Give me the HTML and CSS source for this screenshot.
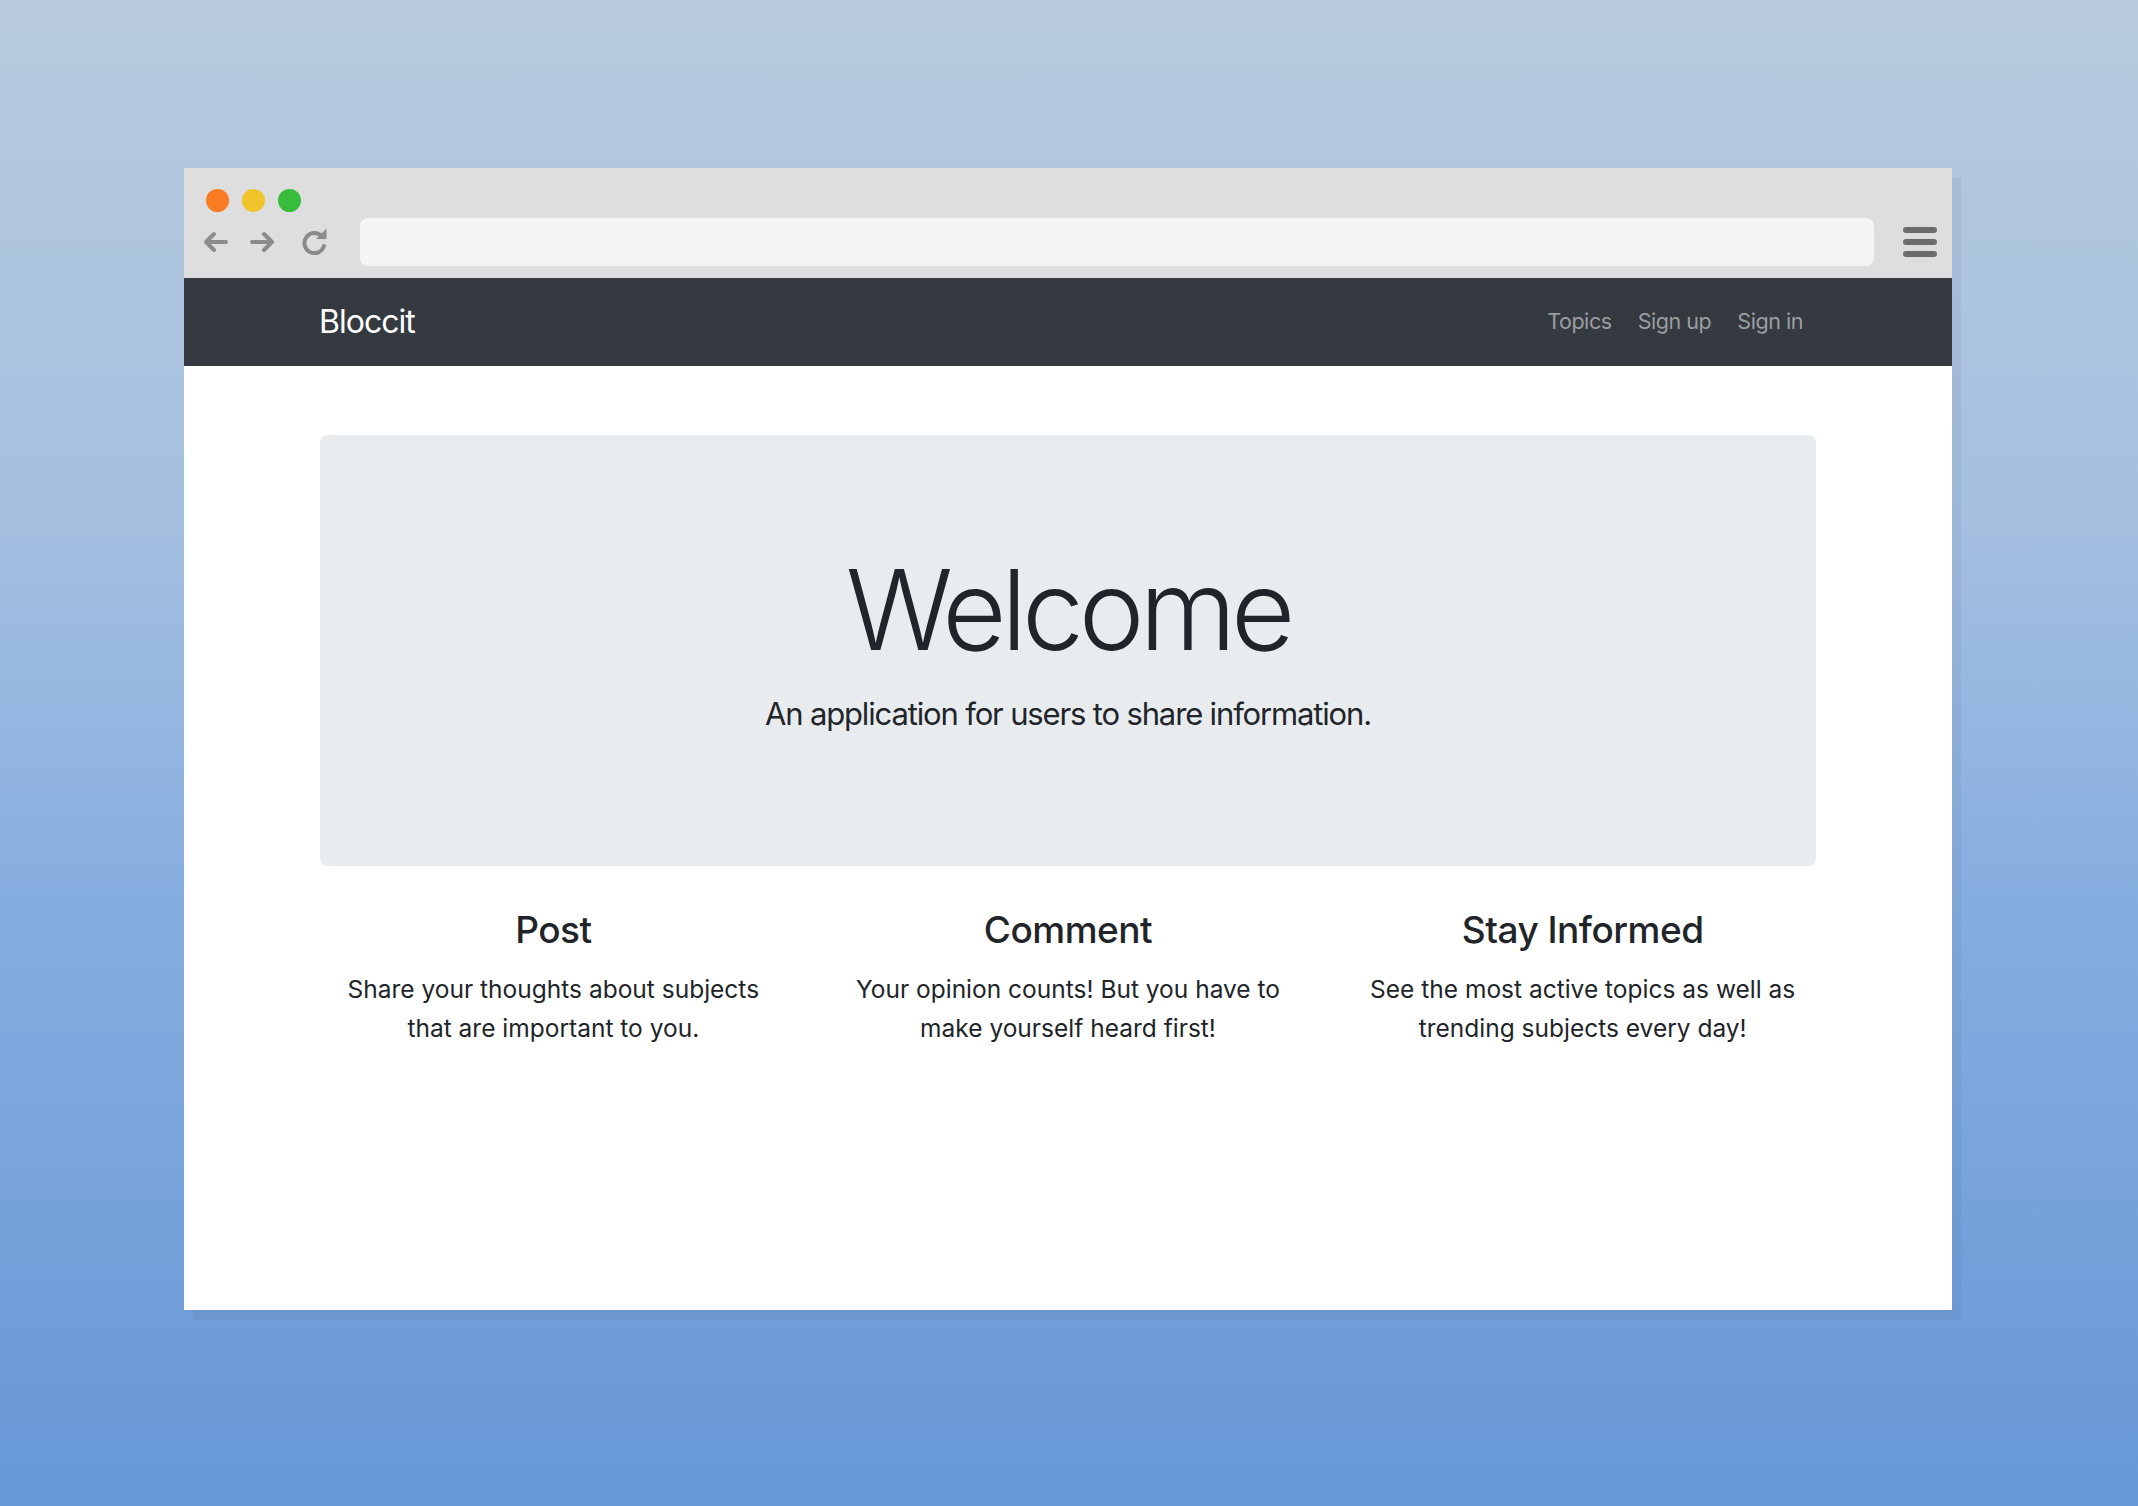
FILE: index.html
```html
<!DOCTYPE html>
<html lang="en">
<head>
<meta charset="utf-8">
<title>Bloccit</title>
<link rel="stylesheet" href="styles.css">
</head>
<body>
<div class="stage">
  <div class="window">
    <div class="chrome">
      <div class="lights">
        <span class="light red"></span>
        <span class="light yellow"></span>
        <span class="light green"></span>
      </div>
      <div class="toolbar">
        <div class="navbtns">
          <svg class="ico back" width="25" height="22" viewBox="0 0 25 22"><path d="M23 11H3M11 3L3 11L11 19" fill="none" stroke="#8b8b8b" stroke-width="4" stroke-linecap="round" stroke-linejoin="round"/></svg>
          <svg class="ico fwd" width="25" height="22" viewBox="0 0 25 22"><path d="M2 11H22M14 3L22 11L14 19" fill="none" stroke="#8b8b8b" stroke-width="4" stroke-linecap="round" stroke-linejoin="round"/></svg>
          <svg class="ico reload" width="27" height="28" viewBox="0 0 27 28"><path d="M21 8.5A10 10 0 1 0 23 18" fill="none" stroke="#8b8b8b" stroke-width="4" stroke-linecap="round"/><polygon points="15,11 25.5,11 25.5,0.5" fill="#8b8b8b"/></svg>
        </div>
        <div class="address"></div>
        <svg class="menu" width="34" height="31" viewBox="0 0 34 31"><rect x="0" y="0" width="34" height="6" rx="3" fill="#6b6b6b"/><rect x="0" y="12" width="34" height="6" rx="3" fill="#6b6b6b"/><rect x="0" y="24" width="34" height="6" rx="3" fill="#6b6b6b"/></svg>
      </div>
    </div>
    <nav class="navbar">
      <div class="container nav-inner">
        <a class="brand">Bloccit</a>
        <ul class="links">
          <li><a>Topics</a></li>
          <li><a>Sign up</a></li>
          <li><a>Sign in</a></li>
        </ul>
      </div>
    </nav>
    <main class="container">
      <section class="jumbotron">
        <h1 class="display">Welcome</h1>
        <p class="lead">An application for users to share information.</p>
      </section>
      <div class="features">
        <div class="feature">
          <h4>Post</h4>
          <p>Share your thoughts about subjects<br>that are important to you.</p>
        </div>
        <div class="feature">
          <h4>Comment</h4>
          <p>Your opinion counts! But you have to<br>make yourself heard first!</p>
        </div>
        <div class="feature">
          <h4>Stay Informed</h4>
          <p>See the most active topics as well as<br>trending subjects every day!</p>
        </div>
      </div>
    </main>
  </div>
</div>
</body>
</html>
```
FILE: styles.css
```css
* { box-sizing: border-box; }
html, body { margin: 0; padding: 0; }
body {
  width: 2138px;
  height: 1506px;
  overflow: hidden;
  background: linear-gradient(180deg, #b8cbdd 0%, #a4bfe0 35%, #86ade0 60%, #6797d6 100%);
  font-family: "Inter", "Noto Sans", "Liberation Sans", sans-serif;
  color: #212529;
}
.stage {
  padding: 168px 0 0 184px;
}
.window {
  width: 1768px;
  height: 1142px;
  background: #fff;
  box-shadow: 9px 10px 0 rgba(30, 50, 90, 0.06);
  overflow: hidden;
}
.chrome {
  height: 110px;
  background: #dedede;
  padding: 21px 0 0 22px;
}
.lights {
  display: flex;
  gap: 13px;
  height: 22px;
}
.light {
  width: 23px;
  height: 23px;
  border-radius: 50%;
  display: block;
}
.red { background: #f97b22; }
.yellow { background: #f0c52c; }
.green { background: #38bc3b; }
.toolbar {
  display: flex;
  align-items: center;
  margin-top: 7px;
  height: 48px;
}
.navbtns {
  display: flex;
  align-items: center;
  width: 154px;
}
.ico { display: block; }
.back { margin-left: -3px; }
.fwd { margin-left: 22px; }
.reload { margin-left: 26px; margin-top: -1px; }
.address {
  width: 1514px;
  height: 48px;
  background: #f5f5f5;
  border-radius: 8px;
}
.menu {
  margin-left: 29px;
  display: block;
}
.navbar {
  height: 88px;
  background: #343a40;
}
.container {
  width: 1496px;
  margin: 0 auto;
}
.nav-inner {
  display: flex;
  align-items: center;
  justify-content: space-between;
  height: 88px;
}
.brand {
  color: #fff;
  font-size: 32px;
  letter-spacing: -1px;
  line-height: 1;
  margin-left: -1px;
}
.links {
  display: flex;
  list-style: none;
  margin: 0;
  padding: 0;
}
.links a {
  display: block;
  color: #9b9ea1;
  font-size: 21.5px;
  padding: 0 13px;
  line-height: 1;
  letter-spacing: -0.45px;
}
.jumbotron {
  margin-top: 69px;
  height: 431px;
  background: #e9ecef;
  border-radius: 8px;
  text-align: center;
  padding-top: 110px;
}
.display {
  margin: 0;
  font-size: 111px;
  font-weight: 300;
  letter-spacing: -5.2px;
  line-height: 130px;
}
.lead {
  margin: 15px 0 0;
  font-size: 31px;
  font-weight: 400;
  letter-spacing: -1.15px;
  line-height: 48px;
}
.features {
  display: grid;
  grid-template-columns: repeat(3, 1fr);
  column-gap: 48px;
  margin: 0 -24px;
  padding: 0 24px;
  text-align: center;
}
.feature h4 {
  margin: 41px 0 0;
  font-size: 37px;
  font-weight: 500;
  letter-spacing: -0.5px;
  line-height: 46px;
}
.feature p {
  margin: 17px 0 0;
  font-size: 24.5px;
  line-height: 39px;
  letter-spacing: 0;
}
```
